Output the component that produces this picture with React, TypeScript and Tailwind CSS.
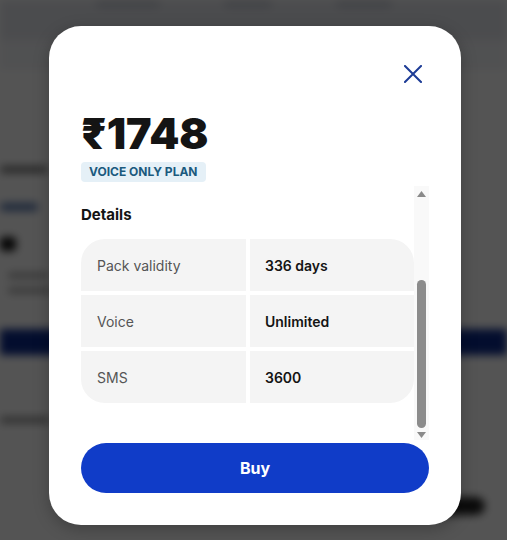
const rows = [
  { label: "Pack validity", value: "336 days" },
  { label: "Voice", value: "Unlimited" },
  { label: "SMS", value: "3600" },
];

const BackgroundPage = () => (
  <div className="w-full h-[540px] bg-white overflow-hidden blur-[4px]">
    <div className="h-[40px] bg-[#e4e6ec] flex items-start gap-16 px-24 pt-0">
      <div className="w-16 h-2 bg-[#c8ccd6] rounded" />
      <div className="w-12 h-2 bg-[#c8ccd6] rounded" />
      <div className="w-14 h-2 bg-[#c8ccd6] rounded" />
    </div>
    <div className="h-[30px] bg-[#f3f4f8]" />
    <div className="flex flex-col pt-[96px] gap-0">
      <div className="w-[48px] h-[7px] bg-[#777] rounded ml-0" />
      <div className="w-[38px] h-[8px] bg-[#5a7ab0] rounded mt-[30px]" />
      <div className="w-[16px] h-[14px] bg-[#111] rounded mt-[26px]" />
      <div className="w-[40px] h-[5px] bg-[#999] rounded mt-[22px] ml-[8px]" />
      <div className="w-[44px] h-[5px] bg-[#999] rounded mt-[10px] ml-[8px]" />
      <div className="w-full h-[26px] bg-[#0c2a8c] mt-[36px]" />
      <div className="w-[50px] h-[6px] bg-[#888] rounded mt-[62px]" />
      <div className="flex justify-end pr-[22px] mt-[74px]">
        <div className="w-[190px] h-[18px] bg-[#222] rounded-full" />
      </div>
    </div>
  </div>
);

export default function App() {
  return (
    <div className="relative w-[507px] h-[540px] overflow-hidden font-['Inter',sans-serif]">
      <BackgroundPage />
      <div className="absolute inset-0 bg-black/[0.67] pl-[49px] pt-[26px]">
        <div className="w-[412px] h-[499px] bg-white rounded-[32px] shadow-[0_4px_16px_rgba(0,0,0,0.25)] flex flex-col pt-[36px] pl-[32px] pr-[32px] pb-[32px]">
          <div className="flex justify-end h-[24px] pr-[4px]">
            <button className="w-[24px] h-[24px] flex items-center justify-center">
              <svg width="18" height="18" viewBox="0 0 18 18" fill="none">
                <path
                  d="M1 1 L17 17 M17 1 L1 17"
                  stroke="#1d3c96"
                  strokeWidth="2"
                  strokeLinecap="square"
                />
              </svg>
            </button>
          </div>

          <h1 className="mt-[26px] text-[43px] leading-[42px] font-black text-[#141414]">
            ₹1748
          </h1>
          <div className="mt-[8px] self-start h-[20px] px-[8px] rounded-[4px] bg-[#e5f0f7] text-[#1b5a7e] text-[12px] leading-[20px] font-bold">
            VOICE ONLY PLAN
          </div>

          <div className="mt-[4px] h-[254px] flex">
            <div className="flex-1 pt-[19px]">
              <h2 className="text-[15px] leading-[20px] font-bold text-[#141414]">
                Details
              </h2>
              <div className="mt-[14px] grid grid-cols-[165px_164px] gap-[4px] rounded-[24px] overflow-hidden">
                {rows.map((r) => (
                  <>
                    <div
                      key={r.label}
                      className="h-[52px] bg-[#f4f4f4] flex items-center pl-[16px] text-[14px] text-[#555555]"
                    >
                      {r.label}
                    </div>
                    <div
                      key={r.value}
                      className="h-[52px] bg-[#f4f4f4] flex items-center pl-[15px] text-[14px] font-semibold text-[#141414]"
                    >
                      {r.value}
                    </div>
                  </>
                ))}
              </div>
            </div>

            {/* scrollbar */}
            <div className="w-[15px] bg-[#f9f9f9] flex flex-col items-center pt-[5px] pb-[2px]">
              <svg width="9" height="6" viewBox="0 0 9 6">
                <path d="M4.5 0 L9 6 L0 6 Z" fill="#8a8a8a" />
              </svg>
              <div className="flex-1 w-full flex flex-col items-center justify-end pb-[4px]">
                <div className="w-[9px] h-[148px] rounded-full bg-[#8c8c8c]" />
              </div>
              <svg width="9" height="6" viewBox="0 0 9 6">
                <path d="M0 0 L9 0 L4.5 6 Z" fill="#8a8a8a" />
              </svg>
            </div>
          </div>

          <button className="mt-[3px] h-[50px] w-full rounded-full bg-[#103cc8] text-white text-[16px] font-bold">
            Buy
          </button>
        </div>
      </div>
    </div>
  );
}
